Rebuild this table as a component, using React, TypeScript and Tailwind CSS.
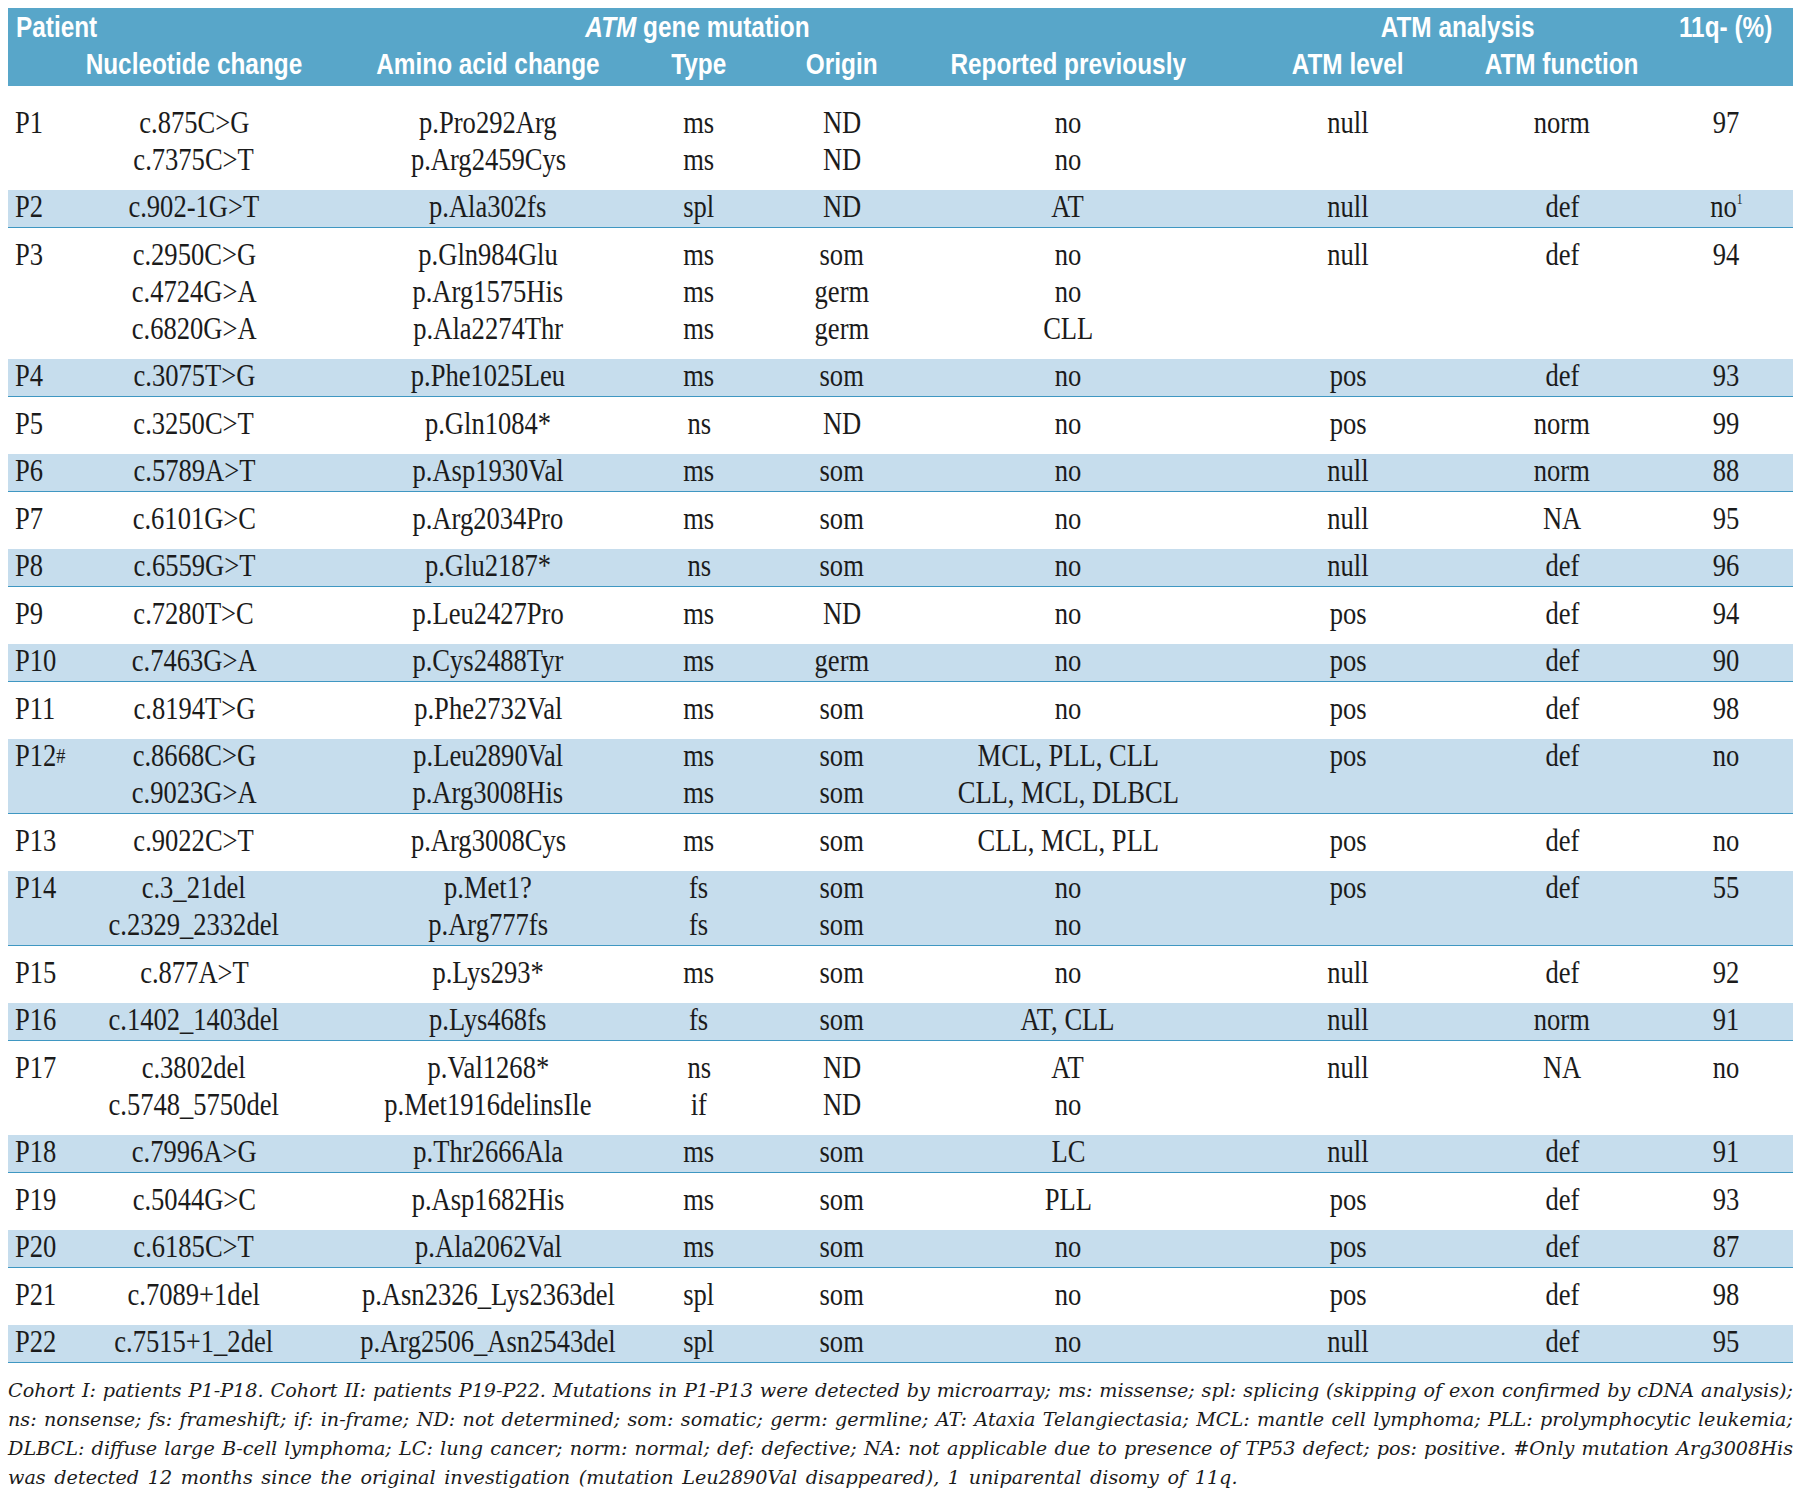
import clsx from 'clsx'

type Line = [string, string, string, string, string]

interface PatientRow {
  id: string
  mark?: boolean
  lines: Array<Line>
  level: string
  func: string
  q: string
  qSup?: boolean
}

const rows: Array<PatientRow> = [
  { id: 'P1', lines: [['c.875C>G', 'p.Pro292Arg', 'ms', 'ND', 'no'], ['c.7375C>T', 'p.Arg2459Cys', 'ms', 'ND', 'no']], level: 'null', func: 'norm', q: '97' },
  { id: 'P2', lines: [['c.902-1G>T', 'p.Ala302fs', 'spl', 'ND', 'AT']], level: 'null', func: 'def', q: 'no', qSup: true },
  { id: 'P3', lines: [['c.2950C>G', 'p.Gln984Glu', 'ms', 'som', 'no'], ['c.4724G>A', 'p.Arg1575His', 'ms', 'germ', 'no'], ['c.6820G>A', 'p.Ala2274Thr', 'ms', 'germ', 'CLL']], level: 'null', func: 'def', q: '94' },
  { id: 'P4', lines: [['c.3075T>G', 'p.Phe1025Leu', 'ms', 'som', 'no']], level: 'pos', func: 'def', q: '93' },
  { id: 'P5', lines: [['c.3250C>T', 'p.Gln1084*', 'ns', 'ND', 'no']], level: 'pos', func: 'norm', q: '99' },
  { id: 'P6', lines: [['c.5789A>T', 'p.Asp1930Val', 'ms', 'som', 'no']], level: 'null', func: 'norm', q: '88' },
  { id: 'P7', lines: [['c.6101G>C', 'p.Arg2034Pro', 'ms', 'som', 'no']], level: 'null', func: 'NA', q: '95' },
  { id: 'P8', lines: [['c.6559G>T', 'p.Glu2187*', 'ns', 'som', 'no']], level: 'null', func: 'def', q: '96' },
  { id: 'P9', lines: [['c.7280T>C', 'p.Leu2427Pro', 'ms', 'ND', 'no']], level: 'pos', func: 'def', q: '94' },
  { id: 'P10', lines: [['c.7463G>A', 'p.Cys2488Tyr', 'ms', 'germ', 'no']], level: 'pos', func: 'def', q: '90' },
  { id: 'P11', lines: [['c.8194T>G', 'p.Phe2732Val', 'ms', 'som', 'no']], level: 'pos', func: 'def', q: '98' },
  { id: 'P12', mark: true, lines: [['c.8668C>G', 'p.Leu2890Val', 'ms', 'som', 'MCL, PLL, CLL'], ['c.9023G>A', 'p.Arg3008His', 'ms', 'som', 'CLL, MCL, DLBCL']], level: 'pos', func: 'def', q: 'no' },
  { id: 'P13', lines: [['c.9022C>T', 'p.Arg3008Cys', 'ms', 'som', 'CLL, MCL, PLL']], level: 'pos', func: 'def', q: 'no' },
  { id: 'P14', lines: [['c.3_21del', 'p.Met1?', 'fs', 'som', 'no'], ['c.2329_2332del', 'p.Arg777fs', 'fs', 'som', 'no']], level: 'pos', func: 'def', q: '55' },
  { id: 'P15', lines: [['c.877A>T', 'p.Lys293*', 'ms', 'som', 'no']], level: 'null', func: 'def', q: '92' },
  { id: 'P16', lines: [['c.1402_1403del', 'p.Lys468fs', 'fs', 'som', 'AT, CLL']], level: 'null', func: 'norm', q: '91' },
  { id: 'P17', lines: [['c.3802del', 'p.Val1268*', 'ns', 'ND', 'AT'], ['c.5748_5750del', 'p.Met1916delinsIle', 'if', 'ND', 'no']], level: 'null', func: 'NA', q: 'no' },
  { id: 'P18', lines: [['c.7996A>G', 'p.Thr2666Ala', 'ms', 'som', 'LC']], level: 'null', func: 'def', q: '91' },
  { id: 'P19', lines: [['c.5044G>C', 'p.Asp1682His', 'ms', 'som', 'PLL']], level: 'pos', func: 'def', q: '93' },
  { id: 'P20', lines: [['c.6185C>T', 'p.Ala2062Val', 'ms', 'som', 'no']], level: 'pos', func: 'def', q: '87' },
  { id: 'P21', lines: [['c.7089+1del', 'p.Asn2326_Lys2363del', 'spl', 'som', 'no']], level: 'pos', func: 'def', q: '98' },
  { id: 'P22', lines: [['c.7515+1_2del', 'p.Arg2506_Asn2543del', 'spl', 'som', 'no']], level: 'null', func: 'def', q: '95' },
]

const COLS = 'grid grid-cols-[23px_326px_262px_160px_126px_326px_234px_194px_134px]'

// condensed serif look: squeeze the glyphs horizontally
const Txt = ({ children, left }: { children: React.ReactNode; left?: boolean }) => (
  <span className={clsx('inline-block whitespace-nowrap scale-x-[0.83] -translate-y-[2px]', left && 'origin-left')}>
    {children}
  </span>
)

// header text is a bold condensed sans
const Head = ({ children, left }: { children: React.ReactNode; left?: boolean }) => (
  <span className={clsx('inline-block whitespace-nowrap scale-x-[0.84]', left && 'origin-left')}>{children}</span>
)

const Center = ({ items }: { items: Array<React.ReactNode> }) => (
  <div className="flex flex-col items-center">
    {items.map((t, i) => (
      <Txt key={i}>{t}</Txt>
    ))}
  </div>
)

const Row = ({ row, shaded, first }: { row: PatientRow; shaded: boolean; first: boolean }) => (
  <div
    className={clsx(
      COLS,
      'leading-[37px]',
      shaded ? 'bg-[#c6dded] border-b border-[#3f97c2]' : 'py-[10px]',
      first && 'mt-[10px]'
    )}
  >
    <div className="pl-[7px] whitespace-nowrap">
      <Txt left>
        {row.id}
        {row.mark && <span className="text-[22px] leading-none align-[3px]">#</span>}
      </Txt>
    </div>
    {[0, 1, 2, 3, 4].map((c) => (
      <Center key={c} items={row.lines.map((l) => l[c])} />
    ))}
    <Center items={[row.level]} />
    <Center items={[row.func]} />
    <Center
      items={[
        row.qSup ? (
          <>
            no<span className="text-[14px] leading-none align-[13px]">1</span>
          </>
        ) : (
          row.q
        ),
      ]}
    />
  </div>
)

const notes = [
  'Cohort I: patients P1-P18. Cohort II: patients P19-P22. Mutations in P1-P13 were detected by microarray; ms: missense; spl: splicing (skipping of exon confirmed by cDNA analysis);',
  'ns: nonsense; fs: frameshift; if: in-frame; ND: not determined; som: somatic; germ: germline; AT: Ataxia Telangiectasia; MCL: mantle cell lymphoma; PLL: prolymphocytic leukemia;',
  'DLBCL: diffuse large B-cell lymphoma; LC: lung cancer; norm: normal; def: defective; NA: not applicable due to presence of TP53 defect; pos: positive. #Only mutation Arg3008His',
  'was detected 12 months since the original investigation (mutation Leu2890Val disappeared), 1 uniparental disomy of 11q.',
]

export default function App() {
  return (
    <div className="min-h-screen bg-white pt-2 pl-2">
      <div className="w-[1785px] text-[#1b1b1b] font-['Liberation_Serif','Times_New_Roman',serif] text-[32px]">
        {/* header */}
        <div className="h-[78px] pt-[1px] bg-[#58a6c9] text-white font-bold text-[29px] leading-[37px] font-['Liberation_Sans','Arial',sans-serif]">
          <div className="grid grid-cols-[129px_1120px_402px_134px]">
            <div className="pl-[8px]">
              <Head left>Patient</Head>
            </div>
            <div className="flex justify-center">
              <Head>
                <span className="italic">ATM</span> gene mutation
              </Head>
            </div>
            <div className="flex justify-center">
              <Head>ATM analysis</Head>
            </div>
            <div className="flex justify-center">
              <Head>11q- (%)</Head>
            </div>
          </div>
          <div className={COLS}>
            <div />
            {['Nucleotide change', 'Amino acid change', 'Type', 'Origin', 'Reported previously', 'ATM level', 'ATM function'].map((h) => (
              <div key={h} className="flex justify-center">
                <Head>{h}</Head>
              </div>
            ))}
            <div />
          </div>
        </div>

        {rows.map((r, i) => (
          <Row key={r.id} row={r} shaded={i % 2 === 1} first={i === 0} />
        ))}

        {/* footnote */}
        <div className="mt-[13px] italic text-[19.2px] leading-[29px] font-['DejaVu_Serif','Liberation_Serif',serif] text-[#1b1b1b]">
          {notes.map((n, i) => (
            <div
              key={i}
              className={clsx(
                'whitespace-nowrap',
                i < notes.length - 1 ? 'text-justify [text-align-last:justify]' : '[word-spacing:2.5px]'
              )}
            >
              {n}
            </div>
          ))}
        </div>
      </div>
    </div>
  )
}
